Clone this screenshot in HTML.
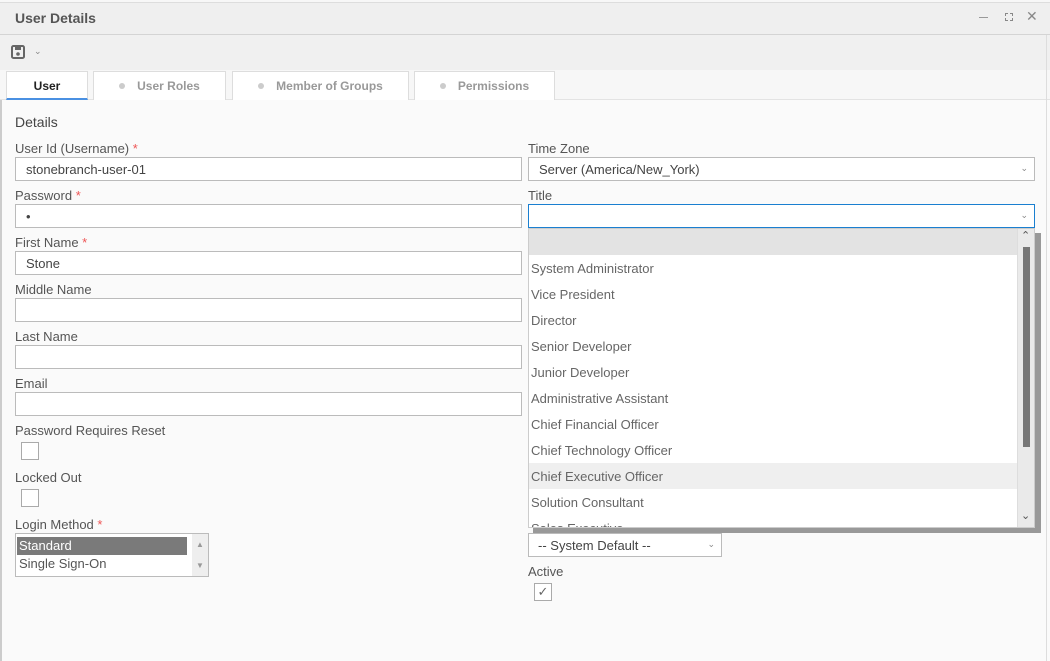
<!DOCTYPE html>
<html><head><style>
*{box-sizing:border-box;margin:0;padding:0}
body{width:1050px;height:661px;overflow:hidden;background:#fafafa;font-family:"Liberation Sans",sans-serif;color:#555;position:relative}
.a{position:absolute}
.lbl{position:absolute;font-size:13px;color:#555}
.req{color:#e55}
.inp{position:absolute;height:24px;background:#fff;border:1px solid #bbb;font-size:13px;padding:4px 10px;color:#444}
.chev{position:absolute;right:6px;top:5px;font-size:9px;color:#888}
.cb{position:absolute;width:18px;height:18px;border:1px solid #aaa;background:#fff}
.opt{position:absolute;left:0;width:489px;height:26px;font-size:13px;padding:6px 2px;color:#666}
.tab{position:absolute;top:71px;height:29px;background:#fff;border:1px solid #ddd;border-bottom:none;font-size:12px;color:#999;text-align:center;line-height:29px;font-weight:bold}
.dot{display:inline-block;width:6px;height:6px;border-radius:50%;background:#ccc;margin-right:12px;vertical-align:1px}
</style></head><body>
<div class="a" style="left:0;top:0;width:1050px;height:3px;background:#f7f7f7;border-bottom:1px solid #ddd"></div>
<div class="a" style="left:0;top:3px;width:1050px;height:32px;background:#efefef;border-bottom:1px solid #d4d4d4"></div>
<div class="a" style="left:15px;top:10px;font-size:14px;font-weight:bold;color:#555">User Details</div>
<div class="a" style="left:979px;top:17px;width:9px;height:1px;background:#999"></div>
<div class="a" style="left:1005px;top:13px;width:8px;height:8px;border:1px dashed #888"></div>
<div class="a" style="left:1026px;top:8px;font-size:14px;color:#888">✕</div>
<div class="a" style="left:0;top:35px;width:1050px;height:35px;background:#f0f0f0"></div>
<svg class="a" style="left:11px;top:45px" width="14" height="14" viewBox="0 0 14 14"><rect x="1" y="1" width="12" height="12" rx="1.5" fill="none" stroke="#666" stroke-width="2"/><rect x="4" y="2" width="6" height="3" fill="#666"/><circle cx="7" cy="9" r="1.8" fill="#666"/></svg>
<div class="a" style="left:34px;top:46px;font-size:9px;color:#888">⌄</div>
<div class="a" style="left:0;top:70px;width:1050px;height:30px;background:#f7f7f7;border-bottom:1px solid #e3e3e3"></div>
<div class="tab" style="left:6px;width:82px;color:#222;border-bottom:2px solid #4a90e2">User</div>
<div class="tab" style="left:93px;width:133px"><span class="dot"></span>User Roles</div>
<div class="tab" style="left:232px;width:177px"><span class="dot"></span>Member of Groups</div>
<div class="tab" style="left:414px;width:141px"><span class="dot"></span>Permissions</div>
<div class="a" style="left:0;top:100px;width:2px;height:561px;background:#ccc"></div>
<div class="a" style="left:1046px;top:35px;width:1px;height:626px;background:#ddd"></div>
<div class="lbl" style="left:15px;top:114px;font-size:14px;color:#444">Details</div>

<div class="lbl" style="left:15px;top:141px">User Id (Username) <span class="req">*</span></div>
<div class="inp" style="left:15px;top:157px;width:507px">stonebranch-user-01</div>
<div class="lbl" style="left:15px;top:188px">Password <span class="req">*</span></div>
<div class="inp" style="left:15px;top:204px;width:507px">•</div>
<div class="lbl" style="left:15px;top:235px">First Name <span class="req">*</span></div>
<div class="inp" style="left:15px;top:251px;width:507px">Stone</div>
<div class="lbl" style="left:15px;top:282px">Middle Name</div>
<div class="inp" style="left:15px;top:298px;width:507px"></div>
<div class="lbl" style="left:15px;top:329px">Last Name</div>
<div class="inp" style="left:15px;top:345px;width:507px"></div>
<div class="lbl" style="left:15px;top:376px">Email</div>
<div class="inp" style="left:15px;top:392px;width:507px"></div>
<div class="lbl" style="left:15px;top:423px">Password Requires Reset</div>
<div class="cb" style="left:21px;top:442px"></div>
<div class="lbl" style="left:15px;top:470px">Locked Out</div>
<div class="cb" style="left:21px;top:489px"></div>
<div class="lbl" style="left:15px;top:517px">Login Method <span class="req">*</span></div>
<div class="a" style="left:15px;top:533px;width:194px;height:44px;border:1px solid #bbb;background:#fff">
<div class="a" style="left:1px;top:3px;width:170px;height:18px;background:#7a7a7a;color:#fff;font-size:13px;padding:1px 2px">Standard</div>
<div class="a" style="left:3px;top:22px;font-size:13px">Single Sign-On</div>
<div class="a" style="right:0;top:0;width:16px;height:42px;background:#eee;font-size:8px;color:#999;text-align:center;line-height:21px">▲<br>▼</div>
</div>

<div class="lbl" style="left:528px;top:141px">Time Zone</div>
<div class="inp" style="left:528px;top:157px;width:507px">Server (America/New_York)<span class="chev">⌄</span></div>
<div class="lbl" style="left:528px;top:188px">Title</div>
<div class="inp" style="left:528px;top:204px;width:507px;border-color:#1a7fd0"><span class="chev">⌄</span></div>
<div class="inp" style="left:528px;top:533px;width:194px;padding-left:9px">-- System Default --<span class="chev">⌄</span></div>
<div class="lbl" style="left:528px;top:564px">Active</div>
<div class="cb" style="left:534px;top:583px;font-size:13px;color:#666;text-align:center;line-height:16px">✓</div>

<div class="a" style="left:533px;top:233px;width:508px;height:300px;background:#999"></div>
<div class="a" style="left:528px;top:228px;width:507px;height:300px;background:#fff;overflow:hidden;border:1px solid #ccc">
<div class="opt" style="top:0;background:#e3e3e3"></div>
<div class="opt" style="top:26px">System Administrator</div>
<div class="opt" style="top:52px">Vice President</div>
<div class="opt" style="top:78px">Director</div>
<div class="opt" style="top:104px">Senior Developer</div>
<div class="opt" style="top:130px">Junior Developer</div>
<div class="opt" style="top:156px">Administrative Assistant</div>
<div class="opt" style="top:182px">Chief Financial Officer</div>
<div class="opt" style="top:208px">Chief Technology Officer</div>
<div class="opt" style="top:234px;background:#efefef">Chief Executive Officer</div>
<div class="opt" style="top:260px">Solution Consultant</div>
<div class="opt" style="top:286px">Sales Executive</div>
<div class="a" style="left:488px;top:0;width:17px;height:298px;background:#eaeaea;border-left:1px solid #ddd">
<div class="a" style="left:3px;top:0;font-size:11px;color:#555">⌃</div>
<div class="a" style="left:5px;top:18px;width:7px;height:200px;background:#777"></div>
<div class="a" style="left:3px;top:280px;font-size:11px;color:#555">⌄</div>
</div>
</div>
</body></html>
